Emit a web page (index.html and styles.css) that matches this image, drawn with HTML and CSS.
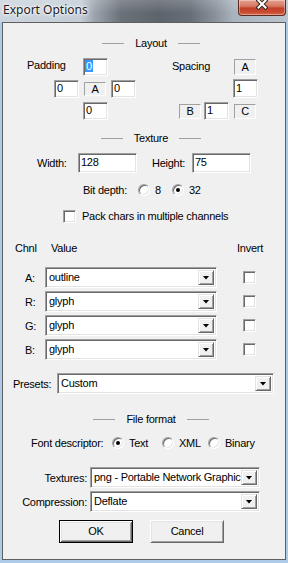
FILE: index.html
```html
<!DOCTYPE html>
<html>
<head>
<meta charset="utf-8">
<title>Export Options</title>
<link rel="stylesheet" href="styles.css">
</head>
<body>
<div class="window">
  <div class="titlebar">
    <span class="title">Export Options</span>
    <div class="close">
      <svg class="xglyph" width="12" height="11" viewBox="0 0 12 11">
        <path d="M2.5 1.5 L9.5 8.5 M9.5 1.5 L2.5 8.5" stroke="#3b2a2a" stroke-width="4.2" stroke-linecap="square"/>
        <path d="M2.5 1.5 L9.5 8.5 M9.5 1.5 L2.5 8.5" stroke="#ffffff" stroke-width="2" stroke-linecap="square"/>
      </svg>
    </div>
  </div>
  <div class="client">
    <div class="heading h-layout"><span class="rule"></span><span>Layout</span><span class="rule"></span></div>

    <div class="layout-row">
      <div class="pad-grid">
        <span class="lbl pad-lbl">Padding</span>
        <div class="edit c3 r1"><span class="sel">0</span></div>
        <div class="edit c2 r2">0</div>
        <div class="static c3 r2 st-a">A</div>
        <div class="edit c4 r2">0</div>
        <div class="edit c3 r3">0</div>
      </div>
      <div class="spc-grid">
        <span class="lbl spc-lbl">Spacing</span>
        <div class="static c4 r1 st-top">A</div>
        <div class="edit c4 r2 up1">1</div>
        <div class="static c2 r3 st-b">B</div>
        <div class="edit c3 r3">1</div>
        <div class="static c4 r3 st-c">C</div>
      </div>
    </div>

    <div class="heading h-texture"><span class="rule"></span><span>Texture</span><span class="rule"></span></div>

    <div class="size-row">
      <span class="lbl w-lbl">Width:</span>
      <div class="edit size-edit">128</div>
      <span class="lbl h-lbl">Height:</span>
      <div class="edit size-edit">75</div>
    </div>

    <div class="bits-row">
      <span class="lbl bits-lbl">Bit depth:</span>
      <span class="opt opt-8"><span class="radio"></span>8</span>
      <span class="opt"><span class="radio on"></span>32</span>
    </div>

    <div class="pack-row">
      <span class="check"></span>
      <span>Pack chars in multiple channels</span>
    </div>

    <div class="chnl-head">
      <span class="ch-col1">Chnl</span>
      <span class="ch-col2">Value</span>
      <span>Invert</span>
    </div>

    <div class="chnl-grid">
      <span class="ch-lbl">A:</span>
      <div class="combo"><span class="val">outline</span><span class="drop"><i class="arrow"></i></span></div>
      <span class="check"></span>

      <span class="ch-lbl">R:</span>
      <div class="combo"><span class="val">glyph</span><span class="drop"><i class="arrow"></i></span></div>
      <span class="check"></span>

      <span class="ch-lbl">G:</span>
      <div class="combo"><span class="val">glyph</span><span class="drop"><i class="arrow"></i></span></div>
      <span class="check"></span>

      <span class="ch-lbl">B:</span>
      <div class="combo"><span class="val">glyph</span><span class="drop"><i class="arrow"></i></span></div>
      <span class="check"></span>
    </div>

    <div class="presets-row">
      <span class="lbl presets-lbl">Presets:</span>
      <div class="combo presets-combo"><span class="val">Custom</span><span class="drop"><i class="arrow"></i></span></div>
    </div>

    <div class="heading h-file"><span class="rule"></span><span>File format</span><span class="rule"></span></div>

    <div class="desc-row">
      <span class="lbl desc-lbl">Font descriptor:</span>
      <span class="opt opt-text"><span class="radio on"></span>Text</span>
      <span class="opt opt-xml"><span class="radio"></span>XML</span>
      <span class="opt"><span class="radio"></span>Binary</span>
    </div>

    <div class="format-grid">
      <span class="fmt-lbl">Textures:</span>
      <div class="combo"><span class="val">png - Portable Network Graphic</span><span class="drop"><i class="arrow"></i></span></div>
      <span class="fmt-lbl">Compression:</span>
      <div class="combo"><span class="val">Deflate</span><span class="drop"><i class="arrow"></i></span></div>
    </div>

    <div class="btn-row">
      <div class="btn default">OK</div>
      <div class="btn">Cancel</div>
    </div>
  </div>
</div>
</body>
</html>
```

FILE: styles.css
```css
html, body {
  margin: 0;
  padding: 0;
}
body {
  width: 288px;
  height: 563px;
  overflow: hidden;
  background: #aecbe9;
  font-family: "Liberation Sans", Arial, sans-serif;
  font-size: 11px;
  letter-spacing: -0.25px;
  color: #000;
}
.window {
  display: flex;
  flex-direction: column;
  height: 563px;
}

/* ---------- title bar ---------- */
.titlebar {
  height: 22px;
  flex: none;
  display: flex;
  align-items: flex-start;
  background:
    linear-gradient(to bottom, rgba(255,255,255,0.18), rgba(255,255,255,0) 60%),
    linear-gradient(to right, #ccd5de 0, #c4cdd6 28%, #9aa2ab 33%, #6a7179 42%, #5d646c 55%, #666d76 66%, #8a929b 75%, #a9b3bd 81%, #bac5cf 100%);
}
.title {
  font-family: "Noto Sans", "Open Sans", sans-serif;
  font-size: 12px;
  letter-spacing: 0;
  line-height: 16px;
  padding: 2px 0 0 3px;
  color: #1a1a1a;
  text-shadow: 0 0 5px #fff, 0 0 3px #fff, 0 0 2px #fff;
}
.close {
  margin-left: auto;
  margin-right: 2px;
  width: 48px;
  height: 16px;
  box-sizing: border-box;
  border: 1px solid #5c2a22;
  border-top: none;
  border-radius: 0 0 4px 4px;
  background: linear-gradient(to bottom, #e6a08e 0, #d67a64 40%, #c2402a 55%, #c84a30 80%, #d96a4c 100%);
  box-shadow: inset 0 0 0 1px rgba(255,255,255,0.35);
  display: flex;
  justify-content: center;
  align-items: flex-start;
}
.xglyph {
  display: block;
  margin-top: -1px;
}

/* ---------- client ---------- */
.client {
  flex: 1;
  margin: 0 2px 3px 2px;
  border: 1px solid #5f5f5f;
  background: #f0f0f0;
  display: flex;
  flex-direction: column;
}
.lbl {
  line-height: 14px;
  white-space: nowrap;
}

.heading {
  display: flex;
  justify-content: center;
  align-items: center;
  gap: 11px;
  height: 14px;
  line-height: 14px;
  padding-left: 14px;
}
.rule {
  width: 22px;
  height: 1px;
  background: #a0a0a0;
}
.h-layout { margin-top: 13px; }
.h-texture { margin-top: 11px; }
.h-file { margin-top: 18px; }

/* common controls */
.edit {
  box-sizing: border-box;
  height: 18px;
  width: 25px;
  background: #fff;
  border: 1px solid;
  border-color: #a0a0a0 #fff #fff #a0a0a0;
  box-shadow: inset 1px 1px 0 #696969, inset -1px -1px 0 #e3e3e3;
  padding-left: 2px;
  line-height: 15px;
  white-space: nowrap;
}
.sel {
  background: #3399ff;
  color: #fff;
  padding: 0 1px;
  margin-left: -1px;
}
.static {
  box-sizing: border-box;
  width: 22px;
  border: 1px solid;
  border-color: #a0a0a0 #fff #fff #a0a0a0;
  text-align: center;
  margin-left: 1px;
}

/* layout grids */
.layout-row {
  display: flex;
  margin-top: 8px;
  padding-left: 24px;
  height: 62px;
}
.pad-grid {
  display: grid;
  grid-template-columns: 27px 29px 28px 25px;
  grid-template-rows: 22px 22px 18px;
  align-items: start;
}
.spc-grid {
  display: grid;
  grid-template-columns: 7px 25px 29px 25px;
  grid-template-rows: 22px 22px 18px;
  align-items: start;
  margin-left: 36px;
}
.c2 { grid-column: 2; }
.c3 { grid-column: 3; }
.c4 { grid-column: 4; }
.r1 { grid-row: 1; }
.r2 { grid-row: 2; }
.r3 { grid-row: 3; }
.pad-lbl { grid-column: 1 / 3; grid-row: 1; }
.spc-lbl { grid-column: 1 / 4; grid-row: 1; margin-top: 1px; }
.st-a { height: 14px; line-height: 12px; margin-top: 2px; }
.st-top { height: 16px; line-height: 14px; margin-top: 1px; }
.st-b, .st-c { height: 15px; line-height: 13px; margin-top: 2px; }
.st-b { margin-left: 0; }
.up1 { margin-top: -1px; height: 19px; line-height: 16px; }

/* texture size */
.size-row {
  display: flex;
  align-items: center;
  margin-top: 8px;
  padding-left: 34px;
  height: 20px;
}
.size-edit {
  width: 59px;
  height: 20px;
  line-height: 17px;
}
.w-lbl { width: 41px; }
.h-lbl { width: 40px; margin-left: 15px; }

/* radios */
.opt {
  display: flex;
  align-items: center;
  gap: 5px;
  white-space: nowrap;
}
.radio {
  position: relative;
  box-sizing: border-box;
  width: 12px;
  height: 12px;
  border-radius: 50%;
  background: #fff;
  border: 1px solid;
  border-color: #a0a0a0 #fff #fff #a0a0a0;
  box-shadow: inset 1px 1px 0 #696969, inset -1px -1px 0 #e3e3e3;
  flex: none;
}
.radio.on::after {
  content: "";
  position: absolute;
  left: 3px;
  top: 3px;
  width: 4px;
  height: 4px;
  border-radius: 50%;
  background: #000;
}
.bits-row {
  display: flex;
  align-items: center;
  margin-top: 10px;
  padding-left: 80px;
  height: 14px;
}
.bits-lbl { width: 55px; }
.opt-8 { width: 34px; }

/* checkbox */
.check {
  box-sizing: border-box;
  width: 13px;
  height: 13px;
  background: #fff;
  border: 1px solid;
  border-color: #a0a0a0 #fff #fff #a0a0a0;
  box-shadow: inset 1px 1px 0 #696969, inset -1px -1px 0 #e3e3e3;
  flex: none;
}
.pack-row {
  display: flex;
  align-items: center;
  gap: 6px;
  margin-top: 12px;
  padding-left: 60px;
  height: 14px;
  white-space: nowrap;
}

/* channels */
.chnl-head {
  display: flex;
  margin-top: 18px;
  padding-left: 12px;
  height: 14px;
  line-height: 14px;
}
.ch-col1 { width: 36px; }
.ch-col2 { width: 186px; }
.chnl-grid {
  display: grid;
  grid-template-columns: 42px 172px 26px 13px;
  grid-auto-rows: 21px;
  row-gap: 3px;
  align-items: center;
  margin-top: 12px;
}
.ch-lbl {
  padding-left: 22px;
  line-height: 14px;
}
.chnl-grid .check {
  grid-column: 4;
}

/* combo */
.combo {
  box-sizing: border-box;
  display: flex;
  height: 21px;
  background: #fff;
  border: 1px solid;
  border-color: #a0a0a0 #fff #fff #a0a0a0;
  box-shadow: inset 1px 1px 0 #696969, inset -1px -1px 0 #e3e3e3;
  padding: 2px 2px 2px 2px;
}
.val {
  flex: 1;
  min-width: 0;
  overflow: hidden;
  white-space: nowrap;
  line-height: 15px;
  padding-left: 1px;
}
.drop {
  box-sizing: border-box;
  width: 16px;
  height: 15px;
  flex: none;
  background: #f0f0f0;
  border: 1px solid;
  border-color: #e3e3e3 #696969 #696969 #e3e3e3;
  box-shadow: inset 1px 1px 0 #fff, inset -1px -1px 0 #a0a0a0;
  display: flex;
  align-items: center;
  justify-content: center;
}
.arrow {
  display: block;
  width: 7px;
  height: 4px;
  background: #000;
  clip-path: polygon(0 0, 100% 0, 50% 100%);
}

/* presets */
.presets-row {
  display: flex;
  align-items: center;
  margin-top: 13px;
  padding-left: 10px;
  height: 21px;
}
.presets-lbl { width: 44px; }
.presets-combo { width: 217px; }

/* file format */
.desc-row {
  display: flex;
  align-items: center;
  margin-top: 10px;
  padding-left: 28px;
  height: 14px;
}
.desc-lbl { width: 81px; }
.opt-text { width: 50px; }
.opt-xml { width: 46px; }

.format-grid {
  display: grid;
  grid-template-columns: 84px 170px;
  grid-auto-rows: 21px;
  column-gap: 3px;
  row-gap: 3px;
  align-items: center;
  margin-top: 17px;
}
.fmt-lbl {
  text-align: right;
  line-height: 14px;
  white-space: nowrap;
}

/* buttons */
.btn-row {
  display: flex;
  gap: 17px;
  margin-top: 8px;
  padding-left: 56px;
}
.btn {
  box-sizing: border-box;
  width: 74px;
  height: 23px;
  background: #f0f0f0;
  border: 1px solid;
  border-color: #fff #696969 #696969 #fff;
  box-shadow: inset 1px 1px 0 #e3e3e3, inset -1px -1px 0 #a0a0a0;
  text-align: center;
  line-height: 20px;
}
.btn.default {
  border-color: #000;
  box-shadow: inset 1px 1px 0 #fff, inset -1px -1px 0 #696969, inset 2px 2px 0 #e3e3e3, inset -2px -2px 0 #a0a0a0;
}
```
